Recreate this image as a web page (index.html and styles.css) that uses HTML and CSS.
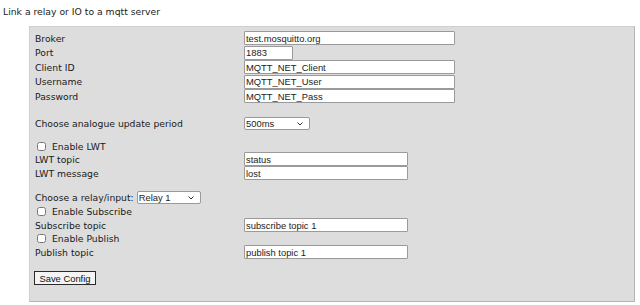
FILE: index.html
```html
<!DOCTYPE html>
<html>
<head>
<meta charset="utf-8">
<title>MQTT</title>
<link rel="stylesheet" href="styles.css">
</head>
<body>
<div class="title">Link a relay or IO to a mqtt server</div>
<div class="panel">
  <div class="row r145"><span>Broker</span><input class="in wide" value="test.mosquitto.org"></div>
  <div class="row r145"><span>Port</span><input class="in port" value="1883"></div>
  <div class="row r145"><span>Client ID</span><input class="in wide" value="MQTT_NET_Client"></div>
  <div class="row r145"><span>Username</span><input class="in wide" value="MQTT_NET_User"></div>
  <div class="row r145"><span>Password</span><input class="in wide" value="MQTT_NET_Pass"></div>

  <div class="row r13 sp13"><span>Choose analogue update period</span>
    <span class="selwrap"><select class="sel period"><option>500ms</option></select><svg class="chev" width="6" height="4" viewBox="0 0 6 4"><path d="M0.5 0.5 L3 3 L5.5 0.5" fill="none" stroke="#333" stroke-width="1"/></svg></span></div>

  <div class="row r12 sp105"><label class="chk"><input type="checkbox" class="cb"><span>Enable LWT</span></label></div>
  <div class="row r14"><span>LWT topic</span><input class="in mid" value="status"></div>
  <div class="row r14"><span>LWT message</span><input class="in mid" value="lost"></div>

  <div class="line r13 sp11"><span>Choose a relay/input:</span>
    <span class="selwrap"><select class="sel relay"><option>Relay 1</option></select><svg class="chev" width="6" height="4" viewBox="0 0 6 4"><path d="M0.5 0.5 L3 3 L5.5 0.5" fill="none" stroke="#333" stroke-width="1"/></svg></span></div>
  <div class="row r14"><label class="chk"><input type="checkbox" class="cb"><span>Enable Subscribe</span></label></div>
  <div class="row r14"><span>Subscribe topic</span><input class="in mid" value="subscribe topic 1"></div>
  <div class="row r13"><label class="chk"><input type="checkbox" class="cb"><span>Enable Publish</span></label></div>
  <div class="row r14"><span>Publish topic</span><input class="in mid" value="publish topic 1"></div>

  <div class="btnrow"><button class="btn">Save Config</button></div>
</div>
</body>
</html>
```
FILE: styles.css
```css
html, body {
  margin: 0;
  padding: 0;
  background: #ffffff;
}
body {
  font-family: "DejaVu Sans", Verdana, sans-serif;
  font-size: 9.25px;
  color: #1a1a1a;
  width: 640px;
  height: 305px;
  overflow: hidden;
}
.title {
  margin: 6px 0 0 3px;
  line-height: 12px;
  height: 12px;
}
.panel {
  box-sizing: border-box;
  margin: 8px 0 0 29px;
  width: 606px;
  height: 276px;
  background: #dddddd;
  border: 1px solid #cfcfcf;
  border-right-color: #b4b4b4;
  border-bottom-color: #b4b4b4;
  padding: 4px 0 0 5px;
}
.row {
  display: grid;
  grid-template-columns: 209px auto;
  align-items: center;
  justify-items: start;
}
.line {
  display: flex;
  align-items: center;
  gap: 3px;
}
.r145 { height: 14.5px; }
.r14 { height: 14px; }
.r13 { height: 13px; }
.r12 { height: 12px; }
.sp13 { margin-top: 13px; }
.sp105 { margin-top: 10.5px; }
.sp11 { margin-top: 11px; }

.in {
  box-sizing: border-box;
  height: 14px;
  margin: 0;
  padding: 0 1px;
  border: 1px solid #9a9a9a;
  border-radius: 1px;
  background: #ffffff;
  font-family: "Liberation Sans", Arial, sans-serif;
  font-size: 9.4px;
  color: #222;
  outline: none;
}
.wide { width: 211px; }
.port { width: 49px; }
.mid { width: 164px; }

.selwrap {
  position: relative;
  display: inline-block;
  height: 13px;
}
.sel {
  -webkit-appearance: none;
  appearance: none;
  display: block;
  box-sizing: border-box;
  height: 13px;
  margin: 0;
  padding: 0 0 0 1px;
  border: 1px solid #9a9a9a;
  border-radius: 2px;
  background: #ffffff;
  font-family: "Liberation Sans", Arial, sans-serif;
  font-size: 9.4px;
  line-height: 11px;
  color: #222;
  outline: none;
}
.period { width: 66px; }
.relay { width: 64px; }
.chev {
  position: absolute;
  right: 7px;
  top: 5px;
  pointer-events: none;
}

.chk {
  grid-column: 1 / 3;
  display: flex;
  align-items: center;
}
.cb {
  box-sizing: border-box;
  width: 9px;
  height: 9px;
  margin: 0 6px 0 2px;
  padding: 0;
}

.btnrow {
  margin-top: 12px;
  height: 14px;
}
.btn {
  box-sizing: border-box;
  width: 62px;
  height: 14px;
  margin: 0 0 0 -1px;
  padding: 0;
  border: 1px solid #2a2a2a;
  border-radius: 0;
  background: #f4f4f4;
  font-family: "Liberation Sans", Arial, sans-serif;
  font-size: 9.4px;
  color: #111;
}
```
